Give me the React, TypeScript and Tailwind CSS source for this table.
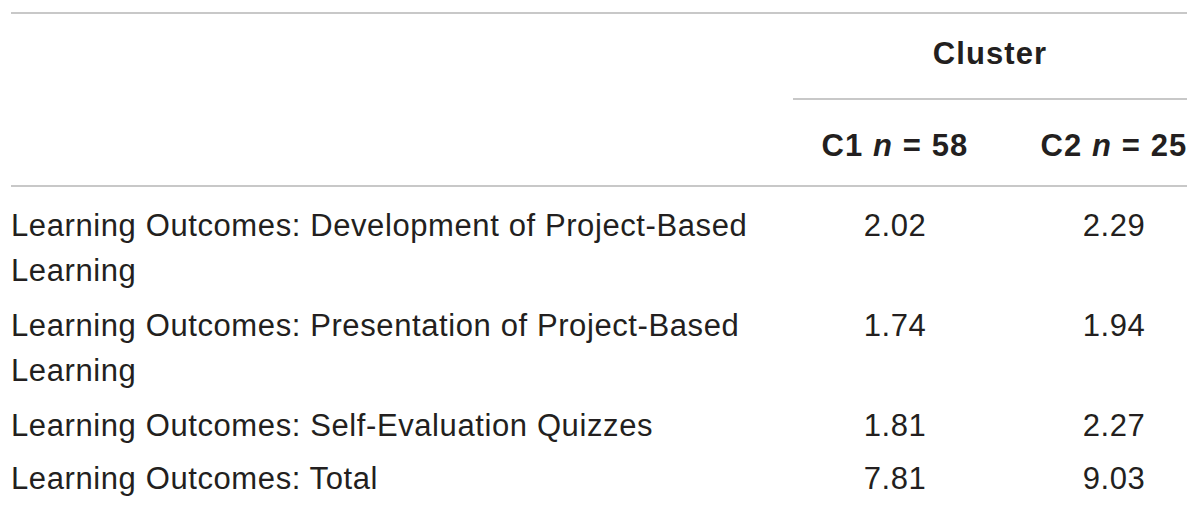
import React from "react";

const rows: { label: string; a: string; b: string; pt: string }[] = [
  { label: "Learning Outcomes: Development of Project-Based Learning", a: "2.02", b: "2.29", pt: "pt-[16px]" },
  { label: "Learning Outcomes: Presentation of Project-Based Learning", a: "1.74", b: "1.94", pt: "pt-[10px]" },
  { label: "Learning Outcomes: Self-Evaluation Quizzes", a: "1.81", b: "2.27", pt: "pt-[10px]" },
  { label: "Learning Outcomes: Total", a: "7.81", b: "9.03", pt: "pt-[8px]" },
];

export default function App() {
  return (
    <div
      className="w-[1200px] h-[511px] bg-white pt-[12px] pl-[11px] text-[#231f20] overflow-hidden"
      style={{ fontFamily: '"Liberation Sans", Arial, sans-serif' }}
    >
      <div className="w-[1176px]">
        <div className="border-t-2 border-b-2 border-[#c8c8c8] grid grid-cols-[782px_204px_190px] text-[31px] leading-[45px] font-bold tracking-[1.1px] whitespace-nowrap">
          <div />
          <div className="col-span-2 border-b-2 border-[#c8c8c8] pt-[17px] pb-[22px] text-center">Cluster</div>
          <div />
          <div className="pt-[23px] pb-[17px] text-center">
            C1 <span className="italic">n</span> = 58
          </div>
          <div className="pt-[23px] pb-[17px] pl-[44px] flex justify-center">
            <span>
              C2 <span className="italic">n</span> = 25
            </span>
          </div>
        </div>
        <div className="text-[31px] leading-[45px] tracking-[0.6px]">
          {rows.map((r) => (
            <div key={r.label} className={`grid grid-cols-[782px_204px_190px] ${r.pt}`}>
              <div>{r.label}</div>
              <div className="text-center">{r.a}</div>
              <div className="pl-[44px] text-center">{r.b}</div>
            </div>
          ))}
        </div>
      </div>
    </div>
  );
}
